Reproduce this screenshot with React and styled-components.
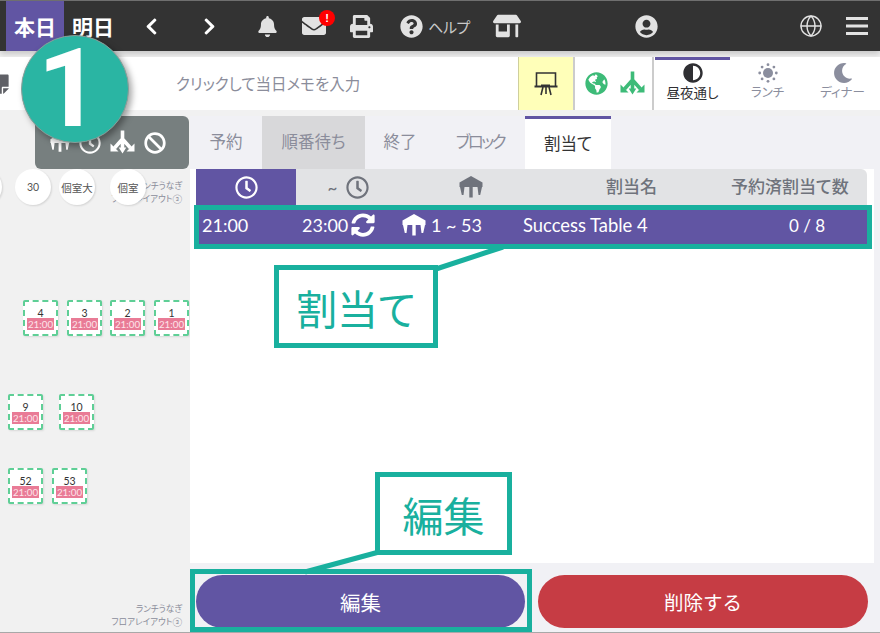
import React from 'react';
import styled, { createGlobalStyle } from 'styled-components';
import {
  FaBell, FaEnvelope, FaPrint, FaQuestionCircle, FaStoreAlt, FaUserCircle,
  FaChevronLeft, FaChevronRight, FaStickyNote, FaGlobeAmericas, FaAdjust, FaMoon,
  FaRegClock, FaBan, FaSyncAlt,
} from 'react-icons/fa';
import { Globe } from 'lucide-react';

const PURPLE = '#6155a3';
const TEAL = '#19b09e';
const FONT = '"Lato", "Noto Sans CJK JP", "Noto Sans", sans-serif';

const Global = createGlobalStyle`
  html, body { margin: 0; padding: 0; background: #f1f1f1; }
  body { font-family: ${FONT}; font-feature-settings: "palt"; }
  * { box-sizing: border-box; }
`;

const Page = styled.div`
  position: relative;
  width: 880px;
  height: 633px;
  overflow: hidden;
  display: flex;
  flex-direction: column;
  background: #f1f1f1;
  border-bottom: 1px solid #a8a8a8;
`;

/* ---------- top bar ---------- */
const TopBar = styled.header`
  height: 51px;
  flex: none;
  display: flex;
  align-items: stretch;
  padding-left: 6px;
  background: #333333;
  border-top: 1px solid #6f6f6f;
  box-shadow: 0 3px 6px rgba(0, 0, 0, 0.18);
  color: #e2e2e2;
`;
const DayTab = styled.div`
  width: 58px;
  display: flex;
  align-items: center;
  justify-content: center;
  font-size: 21px;
  font-weight: 700;
  color: #fff;
  background: ${(p) => (p.$active ? PURPLE : 'transparent')};
`;
const NavSlot = styled.div`
  position: relative;
  width: ${(p) => p.$w}px;
  margin-left: ${(p) => p.$ml || 0}px;
  display: flex;
  align-items: center;
  justify-content: center;
  color: ${(p) => p.$color || '#e2e2e2'};
`;
const HelpLabel = styled.span`
  margin-left: 5px;
  font-size: 15px;
  letter-spacing: -0.5px;
  color: #c9c9c9;
`;
const Badge = styled.span`
  position: absolute;
  left: 23px;
  top: 9px;
  width: 16px;
  height: 16px;
  border-radius: 50%;
  background: #f00;
  color: #fff;
  font: 700 11px/16px "Liberation Sans", sans-serif;
  text-align: center;
`;

/* ---------- memo row ---------- */
const MemoRow = styled.div`
  height: 53px;
  flex: none;
  margin-top: 6px;
  display: flex;
  align-items: stretch;
  background: #fff;
`;
const MemoIcon = styled.div`
  width: 176px;
  margin-left: -12px;
  flex: none;
  display: flex;
  align-items: center;
  color: #5f6066;
  font-size: 22px;
`;
const MemoText = styled.div`
  flex: 1;
  padding: 0 0 2px 12px;
  display: flex;
  align-items: center;
  font-size: 15.5px;
  color: #8b8d9b;
`;
const BoardButton = styled.div`
  width: 57px;
  display: flex;
  align-items: center;
  justify-content: center;
  background: #ffffb9;
  border-left: 1px solid #cfcf9c;
  border-right: 2px solid #cccccc;
`;
const FloorToggle = styled.div`
  width: 79px;
  display: flex;
  align-items: center;
  gap: 12px;
  padding-left: 10px;
  color: #3dbb78;
  border-right: 2px solid #cccccc;
`;
const MealTab = styled.div`
  width: ${(p) => p.$w}px;
  margin-left: ${(p) => p.$ml || 0}px;
  display: flex;
  flex-direction: column;
  align-items: center;
  padding-top: ${(p) => (p.$active ? 3 : 6)}px;
  border-top: ${(p) => (p.$active ? `3px solid ${PURPLE}` : 'none')};
  color: ${(p) => (p.$active ? '#2f2f33' : '#8b8e9e')};
  font-size: ${(p) => (p.$active ? 13.5 : 12.5)}px;
  line-height: 16px;
  svg { font-size: 20px; margin-bottom: 2px; }
`;

/* ---------- body ---------- */
const Body = styled.div`
  flex: 1;
  min-height: 0;
  margin-top: 6px;
  display: flex;
`;
const FloorPane = styled.aside`
  width: 190px;
  flex: none;
  display: flex;
  flex-direction: column;
`;
const FloorTools = styled.div`
  height: 53px;
  flex: none;
  margin: 0 1px 0 35px;
  display: flex;
  align-items: center;
  padding-left: 15px;
  gap: 9px;
  border-radius: 6px;
  background: #777f7f;
  color: #fff;
`;
const FloorCanvas = styled.div`
  position: relative;
  flex: 1;
  overflow: hidden;
`;
const RoundTable = styled.div`
  position: absolute;
  left: ${(p) => p.$x}px;
  top: 0;
  width: 36px;
  height: 36px;
  border-radius: 50%;
  background: #fff;
  box-shadow: 1px 1px 2px rgba(0, 0, 0, 0.12);
  display: flex;
  align-items: center;
  justify-content: center;
  font-size: 10.5px;
  color: #555;
  white-space: nowrap;
  z-index: 1;
`;
const SeatTable = styled.div`
  position: absolute;
  left: ${(p) => p.$x}px;
  top: ${(p) => p.$y}px;
  width: 35px;
  height: 36px;
  padding-top: 6px;
  display: flex;
  flex-direction: column;
  align-items: center;
  background: #fff;
  border: 2px dashed #5fcf96;
  border-radius: 2px;
  box-shadow: 1px 1px 2px rgba(0, 0, 0, 0.1);
  font-size: 10.5px;
  line-height: 10px;
  color: #333;
`;
const SeatTime = styled.span`
  width: 27px;
  height: 12px;
  background: #e97b96;
  color: #fde4ea;
  font-size: 9.8px;
  line-height: 12px;
  text-align: center;
`;
const LayoutLabel = styled.div`
  position: absolute;
  right: 8px;
  top: ${(p) => p.$y}px;
  text-align: right;
  font-size: 8.6px;
  line-height: 13px;
  color: #8b8d9b;
  white-space: nowrap;
`;

const MainPane = styled.main`
  flex: 1;
  min-width: 0;
  display: flex;
  flex-direction: column;
  background: #f1f1f5;
`;
const TabBar = styled.nav`
  height: 53px;
  flex: none;
  display: flex;
`;
const Tab = styled.div`
  width: ${(p) => p.$w}px;
  display: flex;
  align-items: center;
  justify-content: center;
  padding-bottom: ${(p) => (p.$active ? 2 : 4)}px;
  font-size: 16.5px;
  letter-spacing: ${(p) => (p.$tight ? '-2.5px' : 'normal')};
  color: ${(p) => (p.$active ? '#333' : '#8b8d9b')};
  background: ${(p) => (p.$active ? '#fff' : p.$shaded ? '#d8d8da' : 'transparent')};
  border-top: ${(p) => (p.$active ? `3px solid ${PURPLE}` : 'none')};
`;
const Panel = styled.section`
  flex: 1;
  min-height: 0;
  margin-right: 6px;
  padding: 0 7px 0 6px;
  background: #fff;
`;
const COLS = '100px 100px 120px 215px 1fr';
const HeaderRow = styled.div`
  height: 36px;
  display: grid;
  grid-template-columns: ${COLS};
  align-items: stretch;
  background: #e2e3e5;
  border-top-right-radius: 6px;
  color: #6f737c;
  font-size: 17px;
  font-weight: 500;
`;
const HeaderCell = styled.div`
  display: flex;
  align-items: center;
  gap: ${(p) => (p.$gap ? 9 : 0)}px;
  justify-content: ${(p) => (p.$center ? 'center' : 'flex-start')};
  padding-left: ${(p) => p.$pl || 0}px;
  padding-bottom: ${(p) => p.$pb || 0}px;
  background: ${(p) => (p.$active ? PURPLE : 'transparent')};
  color: ${(p) => (p.$active ? '#fff' : 'inherit')};
  white-space: nowrap;
`;
const DataRow = styled.div`
  height: 40px;
  display: grid;
  grid-template-columns: ${COLS};
  align-items: center;
  background: ${PURPLE};
  color: #fff;
`;
const DataCell = styled.div`
  display: flex;
  align-items: center;
  gap: ${(p) => p.$gap || 0}px;
  padding-left: ${(p) => p.$pl || 0}px;
  font-size: ${(p) => p.$fs || 18}px;
  white-space: nowrap;
`;
const ButtonRow = styled.div`
  height: 69px;
  flex: none;
  display: flex;
  gap: 13px;
  padding: 12px 12px 4px 6px;
`;
const ActionButton = styled.button`
  flex: ${(p) => (p.$w ? `0 0 ${p.$w}px` : 1)};
  border: 0;
  border-radius: 27px;
  background: ${(p) => p.$color};
  color: #fff;
  font-family: ${FONT};
  font-size: ${(p) => p.$fs}px;
`;

/* ---------- annotation overlay ---------- */
const StepCircle = styled.div`
  position: absolute;
  left: 21px;
  top: 35px;
  width: 108px;
  height: 108px;
  padding-right: 12px;
  border-radius: 50%;
  background: #2ab5a3;
  border: 1px solid #8c9c98;
  box-shadow: 3px 3px 6px rgba(0, 0, 0, 0.35);
  display: flex;
  align-items: center;
  justify-content: center;
  color: #fff;
  font: 700 110px/1 "Roboto", sans-serif;
  z-index: 5;
`;
const Frame = styled.div`
  position: absolute;
  left: ${(p) => p.$x}px;
  top: ${(p) => p.$y}px;
  width: ${(p) => p.$w}px;
  height: ${(p) => p.$h}px;
  border: 5px solid ${TEAL};
  z-index: 3;
`;
const Callout = styled(Frame)`
  display: flex;
  align-items: center;
  justify-content: center;
  background: #fff;
  color: ${TEAL};
  font-size: 41px;
  z-index: 4;
`;
const Leaders = styled.svg`
  position: absolute;
  left: 0;
  top: 0;
  z-index: 3;
  pointer-events: none;
`;

/* ---------- drawn icons ---------- */
const TreeIcon = ({ size = 25 }) => (
  <svg width={size} height={size} viewBox="0 0 25 25" fill="currentColor">
    <path d="M12.5 0.5V18M12.5 9 4.5 18M12.5 9 20.5 18" fill="none" stroke="currentColor" strokeWidth="3.6" />
    <path d="M0.5 13.5v8h8zM24.5 13.5v8h-8zM8.7 17.5h7.6l-3.8 6z" />
  </svg>
);
const TableIcon = ({ size = 24 }) => (
  <svg width={size} height={size} viewBox="0 0 24 24" fill="currentColor">
    <path d="M12 1 23.5 7.5V12H0.5V7.5z" />
    <path d="M1 12h4.5l-1 8H2.8zM10.3 12h3.4v10.5h-3.4zM18.5 12H23l-1.8 8h-1.7z" />
  </svg>
);
const BoardIcon = () => (
  <svg width="24" height="26" viewBox="0 0 24 26" fill="none" stroke="#333" strokeWidth="1.6">
    <path d="M2.5 15V2h19v13" />
    <path d="M0.5 15.5h23" strokeWidth="2" />
    <path d="M9 16l-2 8M15 16l2 8M12 16v7" />
    <path d="M7 13.5h9v2H7z" fill="#333" stroke="none" />
  </svg>
);
const SunIcon = () => (
  <svg width="20" height="20" viewBox="0 0 20 20" fill="currentColor">
    <circle cx="10" cy="10" r="5" />
    <circle cx="10" cy="1.7" r="1.4" /><circle cx="10" cy="18.3" r="1.4" />
    <circle cx="1.7" cy="10" r="1.4" /><circle cx="18.3" cy="10" r="1.4" />
    <circle cx="4.1" cy="4.1" r="1.4" /><circle cx="15.9" cy="4.1" r="1.4" />
    <circle cx="4.1" cy="15.9" r="1.4" /><circle cx="15.9" cy="15.9" r="1.4" />
  </svg>
);
const MenuIcon = () => (
  <svg width="22" height="20" viewBox="0 0 22 20" fill="currentColor">
    <rect x="0" y="1" width="22" height="3" /><rect x="0" y="8.5" width="22" height="3" /><rect x="0" y="16" width="22" height="3" />
  </svg>
);

const seats = [
  ['4', 23, 131], ['3', 67, 131], ['2', 110, 131], ['1', 154, 131],
  ['9', 8, 225], ['10', 59, 225], ['52', 8, 299], ['53', 52, 299],
];

export default function App() {
  return (
    <Page>
      <Global />
      <TopBar>
        <DayTab $active>本日</DayTab>
        <DayTab>明日</DayTab>
        <NavSlot $w={58} $color="#fff"><FaChevronLeft size={19} /></NavSlot>
        <NavSlot $w={58} $color="#fff"><FaChevronRight size={19} /></NavSlot>
        <NavSlot $w={58}><FaBell size={21} /></NavSlot>
        <NavSlot $w={36}><FaEnvelope size={24} /><Badge>!</Badge></NavSlot>
        <NavSlot $w={58}><FaPrint size={23} /></NavSlot>
        <NavSlot $w={90}><FaQuestionCircle size={23} /><HelpLabel>ヘルプ</HelpLabel></NavSlot>
        <NavSlot $w={54}><FaStoreAlt size={28} /></NavSlot>
        <NavSlot $w={54} $ml={85}><FaUserCircle size={23} /></NavSlot>
        <NavSlot $w={54} $ml={111}><Globe size={24} strokeWidth={1.4} /></NavSlot>
        <NavSlot $w={38}><MenuIcon /></NavSlot>
      </TopBar>

      <MemoRow>
        <MemoIcon><FaStickyNote /></MemoIcon>
        <MemoText>クリックして当日メモを入力</MemoText>
        <BoardButton><BoardIcon /></BoardButton>
        <FloorToggle><FaGlobeAmericas size={23} /><TreeIcon size={25} /></FloorToggle>
        <MealTab $active $w={75} $ml={1}><FaAdjust />昼夜通し</MealTab>
        <MealTab $w={75}><SunIcon />ランチ</MealTab>
        <MealTab $w={75}><FaMoon />ディナー</MealTab>
      </MemoRow>

      <Body>
        <FloorPane>
          <FloorTools>
            <TableIcon size={20} />
            <FaRegClock size={22} />
            <TreeIcon size={25} />
            <FaBan size={22} />
          </FloorTools>
          <FloorCanvas>
            <RoundTable $x={-34}> </RoundTable>
            <RoundTable $x={15}>30</RoundTable>
            <RoundTable $x={59}>個室大</RoundTable>
            <RoundTable $x={110}>個室</RoundTable>
            <LayoutLabel $y={11}>ランチうなぎ<br />フロアレイアウト③</LayoutLabel>
            {seats.map(([n, x, y]) => (
              <SeatTable key={n} $x={x} $y={y}>{n}<SeatTime>21:00</SeatTime></SeatTable>
            ))}
            <LayoutLabel $y={434}>ランチうなぎ<br />フロアレイアウト③</LayoutLabel>
          </FloorCanvas>
        </FloorPane>

        <MainPane>
          <TabBar>
            <Tab $w={72}>予約</Tab>
            <Tab $w={103} $shaded>順番待ち</Tab>
            <Tab $w={70}>終了</Tab>
            <Tab $w={90} $tight>ブロック</Tab>
            <Tab $w={86} $active>割当て</Tab>
          </TabBar>
          <Panel>
            <HeaderRow>
              <HeaderCell $active $center><FaRegClock size={23} /></HeaderCell>
              <HeaderCell $center $gap $pl={5}>~<FaRegClock size={23} /></HeaderCell>
              <HeaderCell $pl={63}><TableIcon size={24} /></HeaderCell>
              <HeaderCell $pl={90} $pb={3}>割当名</HeaderCell>
              <HeaderCell $pb={3}>予約済割当て数</HeaderCell>
            </HeaderRow>
            <DataRow>
              <DataCell $pl={6}>21:00</DataCell>
              <DataCell $pl={6} $gap={3}>23:00<FaSyncAlt size={24} /></DataCell>
              <DataCell $pl={6} $gap={5}><TableIcon size={24} />1 ~ 53</DataCell>
              <DataCell $pl={7} $fs={18.4}>Success Table 4</DataCell>
              <DataCell $pl={58} $fs={17}>0 / 8</DataCell>
            </DataRow>
          </Panel>
          <ButtonRow>
            <ActionButton $color={PURPLE} $w={329} $fs={20.5}>編集</ActionButton>
            <ActionButton $color="#c63c44" $fs={19.5}>削除する</ActionButton>
          </ButtonRow>
        </MainPane>
      </Body>

      <Leaders width="880" height="633" viewBox="0 0 880 633">
        <path d="M436 269 L503 247" stroke={TEAL} strokeWidth="5" fill="none" />
        <path d="M379 552 L305 572" stroke={TEAL} strokeWidth="5" fill="none" />
      </Leaders>
      <StepCircle>1</StepCircle>
      <Frame $x={194} $y={205} $w={678} $h={44} />
      <Frame $x={190} $y={569} $w={342} $h={63} />
      <Callout $x={274} $y={265} $w={164} $h={83}>割当て</Callout>
      <Callout $x={375} $y={472} $w={137} $h={83}>編集</Callout>
    </Page>
  );
}
